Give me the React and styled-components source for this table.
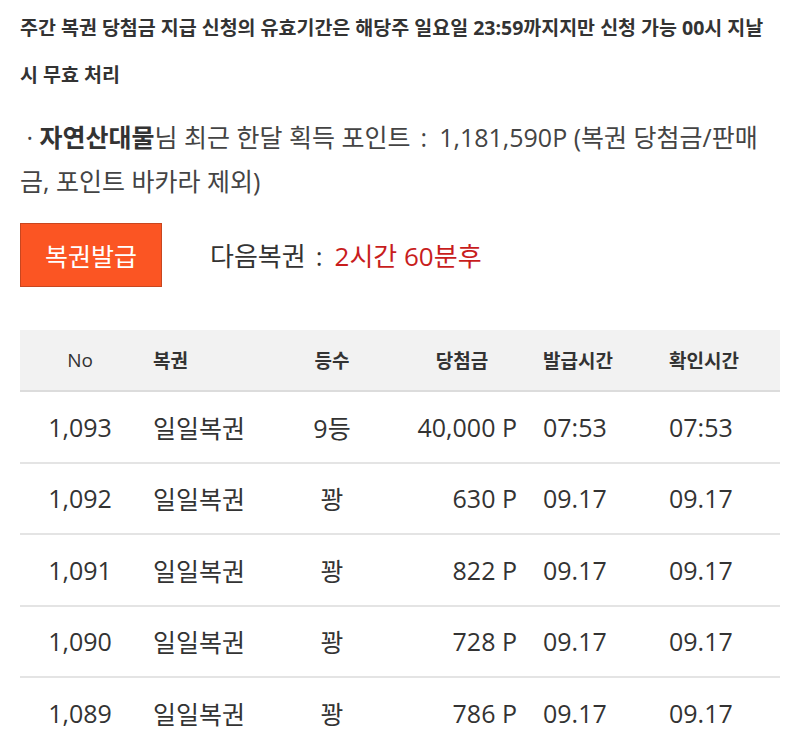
import React from 'react'
import styled, { createGlobalStyle } from 'styled-components'

const GlobalStyle = createGlobalStyle`
  body {
    margin: 0;
    background: #fff;
    font-family: "Open Sans", "Noto Sans CJK KR", sans-serif;
    color: #333;
  }
`

const Page = styled.div`
  padding: 4px 20px 0;
`

const Notice = styled.h2`
  margin: 0;
  font-size: 19.5px;
  font-weight: 700;
  line-height: 47px;
  color: #333;
`

const PointInfo = styled.p`
  margin: 17px 10px 0 0;
  font-size: 25px;
  line-height: 44px;
  color: #444;

  b {
    font-weight: 700;
    color: #333;
  }
`

const Colon = styled.span`
  margin: 0 12px 0 10px;
`

const IssueRow = styled.div`
  display: flex;
  align-items: center;
  gap: 48px;
  margin-top: 20px;
`

const IssueButton = styled.button`
  width: 142px;
  height: 64px;
  background: #fb5523;
  border: 1px solid #c8461f;
  color: #fff;
  font-family: inherit;
  font-size: 25px;
  padding: 0;
  cursor: pointer;
`

const NextTicket = styled.div`
  font-size: 26px;
  color: #333;
`

const Countdown = styled.span`
  color: #c81d1d;
`

const Table = styled.div`
  margin-top: 43px;
`

const Row = styled.div`
  display: grid;
  grid-template-columns: 120px 130px 124px 136px 126px 1fr;
  align-items: center;
  box-sizing: border-box;
  height: ${p => (p.$head ? '62px' : '71.5px')};
  background: ${p => (p.$head ? '#f2f2f2' : '#fff')};
  border-bottom: 2px solid ${p => (p.$head ? '#dcdcdc' : '#e4e4e4')};
  font-size: ${p => (p.$head ? '19px' : '25px')};
  font-weight: ${p => (p.$head ? 700 : 400)};
  color: #333;
`

const Cell = styled.div`
  text-align: ${p => p.$align || 'left'};
  padding: 0 13px;
  font-weight: ${p => (p.$light ? 400 : 'inherit')};
  white-space: nowrap;
`

const rows = [
  ['1,093', '일일복권', '9등', '40,000 P', '07:53', '07:53'],
  ['1,092', '일일복권', '꽝', '630 P', '09.17', '09.17'],
  ['1,091', '일일복권', '꽝', '822 P', '09.17', '09.17'],
  ['1,090', '일일복권', '꽝', '728 P', '09.17', '09.17'],
  ['1,089', '일일복권', '꽝', '786 P', '09.17', '09.17'],
]

export default function App() {
  return (
    <Page>
      <GlobalStyle />
      <Notice>
        주간 복권 당첨금 지급 신청의 유효기간은 해당주 일요일 23:59까지지만 신청 가능 00시 지날 시 무효 처리
      </Notice>
      <PointInfo>
        &nbsp;· <b>자연산대물</b>님 최근 한달 획득 포인트<Colon>:</Colon>1,181,590P (복권 당첨금/판매금, 포인트 바카라 제외)
      </PointInfo>
      <IssueRow>
        <IssueButton>복권발급</IssueButton>
        <NextTicket>
          다음복권<Colon>:</Colon><Countdown>2시간 60분후</Countdown>
        </NextTicket>
      </IssueRow>
      <Table>
        <Row $head>
          <Cell $align="center" $light>No</Cell>
          <Cell>복권</Cell>
          <Cell $align="center">등수</Cell>
          <Cell $align="center">당첨금</Cell>
          <Cell>발급시간</Cell>
          <Cell>확인시간</Cell>
        </Row>
        {rows.map(r => (
          <Row key={r[0]}>
            <Cell $align="center">{r[0]}</Cell>
            <Cell>{r[1]}</Cell>
            <Cell $align="center">{r[2]}</Cell>
            <Cell $align="right">{r[3]}</Cell>
            <Cell>{r[4]}</Cell>
            <Cell>{r[5]}</Cell>
          </Row>
        ))}
      </Table>
    </Page>
  )
}
